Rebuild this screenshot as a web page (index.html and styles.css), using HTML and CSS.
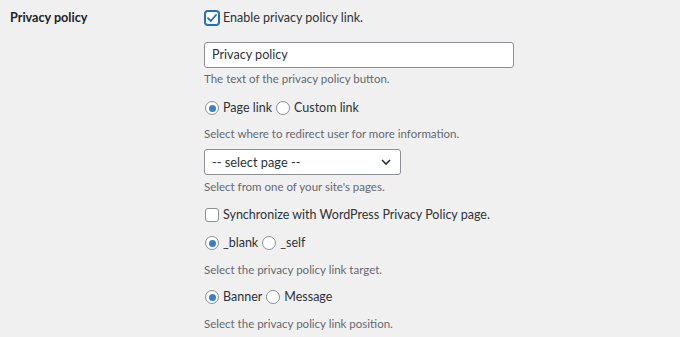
FILE: index.html
```html
<!DOCTYPE html>
<html>
<head>
<meta charset="utf-8">
<link rel="stylesheet" href="styles.css">
</head>
<body>
<div class="row">
  <div class="th">Privacy policy</div>
  <div class="td">
    <label class="line l1"><span class="cb focus"><svg viewBox="0 0 14 14" width="14" height="14"><path d="M3 7.2 L5.8 10 L11 4" fill="none" stroke="#2271b1" stroke-width="1.8" stroke-linecap="round" stroke-linejoin="round"/></svg></span>Enable privacy policy link.</label>
    <div class="input">Privacy policy</div>
    <p class="desc d1">The text of the privacy policy button.</p>
    <div class="line r1"><span class="rd on"></span>Page link<span class="rd second"></span>Custom link</div>
    <p class="desc d2">Select where to redirect user for more information.</p>
    <div class="select"><span>-- select page --</span><svg viewBox="0 0 12 12" width="12" height="12"><path d="M2 4 L6 8 L10 4" fill="none" stroke="#2c3338" stroke-width="1.6"/></svg></div>
    <p class="desc d3">Select from one of your site's pages.</p>
    <label class="line c2"><span class="cb"></span>Synchronize with WordPress Privacy Policy page.</label>
    <div class="line r2"><span class="rd on"></span>_blank<span class="rd second"></span>_self</div>
    <p class="desc d4">Select the privacy policy link target.</p>
    <div class="line r3"><span class="rd on"></span>Banner<span class="rd second"></span>Message</div>
    <p class="desc d5">Select the privacy policy link position.</p>
  </div>
</div>
</body>
</html>
```
FILE: styles.css
```css
html, body {
  margin: 0;
  padding: 0;
  background: #f0f0f1;
}
body {
  font-family: Lato, Roboto, "Liberation Sans", sans-serif;
  font-size: 12.5px;
  color: #3c434a;
  width: 680px;
  height: 337px;
  overflow: hidden;
}
.row {
  display: flex;
  padding-left: 10px;
}
.th {
  width: 194px;
  flex: none;
  font-size: 12.6px;
  font-weight: 700;
  color: #1d2327;
  line-height: 20px;
  padding-top: 8px;
}
.td {
  display: flex;
  flex-direction: column;
  align-items: flex-start;
  padding-top: 8px;
}
.line {
  display: flex;
  align-items: center;
  height: 20px;
  line-height: 20px;
  color: #2c3338;
}
.cb {
  width: 14px;
  height: 14px;
  box-sizing: border-box;
  border: 1px solid #8c8f94;
  border-radius: 3px;
  background: #fff;
  margin: 0 4px 0 1px;
  position: relative;
  flex: none;
}
.cb svg {
  position: absolute;
  left: -1px;
  top: -1px;
}
.cb.focus {
  border-color: #2271b1;
  box-shadow: 0 0 0 1px #2271b1;
}
.rd {
  width: 14px;
  height: 14px;
  box-sizing: border-box;
  border: 1px solid #8c8f94;
  border-radius: 50%;
  background: #fff;
  margin: 0 4px 0 1px;
  display: inline-flex;
  align-items: center;
  justify-content: center;
  flex: none;
}
.rd.second {
  margin-left: 4px;
}
.rd.on::after {
  content: "";
  width: 7px;
  height: 7px;
  border-radius: 50%;
  background: #3582c4;
}
.input {
  margin-top: 14px;
  width: 310px;
  height: 26px;
  box-sizing: border-box;
  border: 1px solid #8c8f94;
  border-radius: 3px;
  background: #fff;
  padding: 0 7px;
  font-size: 12.6px;
  line-height: 24px;
  color: #2c3338;
}
.desc {
  margin: 0;
  font-size: 11.5px;
  line-height: 20px;
  color: #646970;
}
.d1 { margin-top: 1px; }
.r1 { margin-top: 9px; }
.d2 { margin-top: 6px; }
.select {
  margin-top: 5px;
  width: 197px;
  height: 26px;
  box-sizing: border-box;
  border: 1px solid #8c8f94;
  border-radius: 3px;
  background: #fff;
  padding: 0 8px 0 7px;
  display: flex;
  align-items: center;
  justify-content: space-between;
  font-size: 12.8px;
  color: #2c3338;
}
.d3 { margin-top: 2px; }
.c2 { margin-top: 8px; }
.r2 { margin-top: 8px; }
.d4 { margin-top: 7px; }
.r3 { margin-top: 7px; }
.d5 { margin-top: 7px; }
```
